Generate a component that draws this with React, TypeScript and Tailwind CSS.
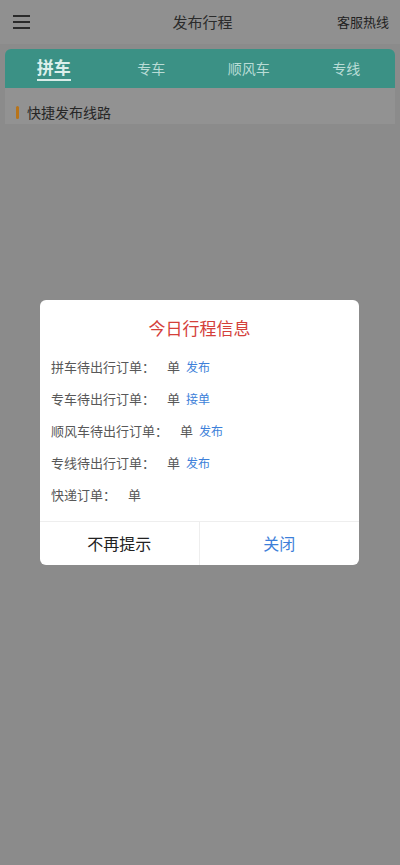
import React from 'react';

const FONT = { fontFamily: '"Noto Sans CJK SC", "Noto Sans", sans-serif' };

const rows = [
  { label: '拼车待出行订单：', link: '发布' },
  { label: '专车待出行订单：', link: '接单' },
  { label: '顺风车待出行订单：', link: '发布' },
  { label: '专线待出行订单：', link: '发布' },
  { label: '快递订单：', link: '' },
];

const tabs = ['拼车', '专车', '顺风车', '专线'];

export default function App() {
  return (
    <div className="relative h-[865px] w-[400px] overflow-hidden bg-[#8b8b8b]" style={FONT}>
      {/* header */}
      <div className="flex h-[44px] items-center justify-between bg-[#909090] px-[13px]">
        <div className="flex w-[17px] flex-col gap-[4px]">
          <span className="h-[2px] bg-[#2a2a2a]" />
          <span className="h-[2px] bg-[#2a2a2a]" />
          <span className="h-[2px] bg-[#2a2a2a]" />
        </div>
        <div className="pl-[38px] text-[15px] text-[#2b2b2b]">发布行程</div>
        <div className="-mr-[2px] text-[13px] text-[#222]">客服热线</div>
      </div>

      {/* tabs */}
      <div className="mx-[5px] mt-[5px] overflow-hidden rounded-t-[6px]">
        <div className="grid h-[39px] grid-cols-4 items-center bg-[#3b9185]">
          {tabs.map((t, i) => (
            <div key={t} className="flex justify-center">
              {i === 0 ? (
                <span className="border-b-2 border-[#d8ece8] pb-[1px] text-[17px] font-bold leading-[22px] text-[#dcefeb]">{t}</span>
              ) : (
                <span className="text-[14px] text-[#b9dcd6]">{t}</span>
              )}
            </div>
          ))}
        </div>
        <div className="flex h-[36px] items-center gap-[8px] bg-[#929292] px-[11px] pt-[12px]">
          <span className="h-[13px] w-[3px] rounded-sm bg-[#b8741a]" />
          <span className="text-[14px] text-[#262626]">快捷发布线路</span>
        </div>
      </div>

      {/* modal */}
      <div className="absolute inset-0 flex items-center justify-center">
        <div className="mr-[1px] w-[319px] overflow-hidden rounded-[6px] bg-white">
          <div className="pt-[15px] pb-[10px] text-center text-[17px] text-[#d4403a]">今日行程信息</div>
          <div className="flex flex-col px-[11px]">
            {rows.map((r) => (
              <div key={r.label} className="flex h-[32px] items-center text-[13px] text-[#585858]">
                <span>{r.label}</span>
                <span className="ml-[12px]">单</span>
                {r.link && <span className="ml-[6px] text-[12px] text-[#3d7fd9]">{r.link}</span>}
              </div>
            ))}
          </div>
          <div className="mt-[10px] grid grid-cols-2 border-t border-[#eeeeee]">
            <div className="flex h-[43px] items-center justify-center border-r border-[#eeeeee] text-[16px] text-[#222]">不再提示</div>
            <div className="flex h-[43px] items-center justify-center text-[16px] text-[#3d7fd9]">关闭</div>
          </div>
        </div>
      </div>
    </div>
  );
}
